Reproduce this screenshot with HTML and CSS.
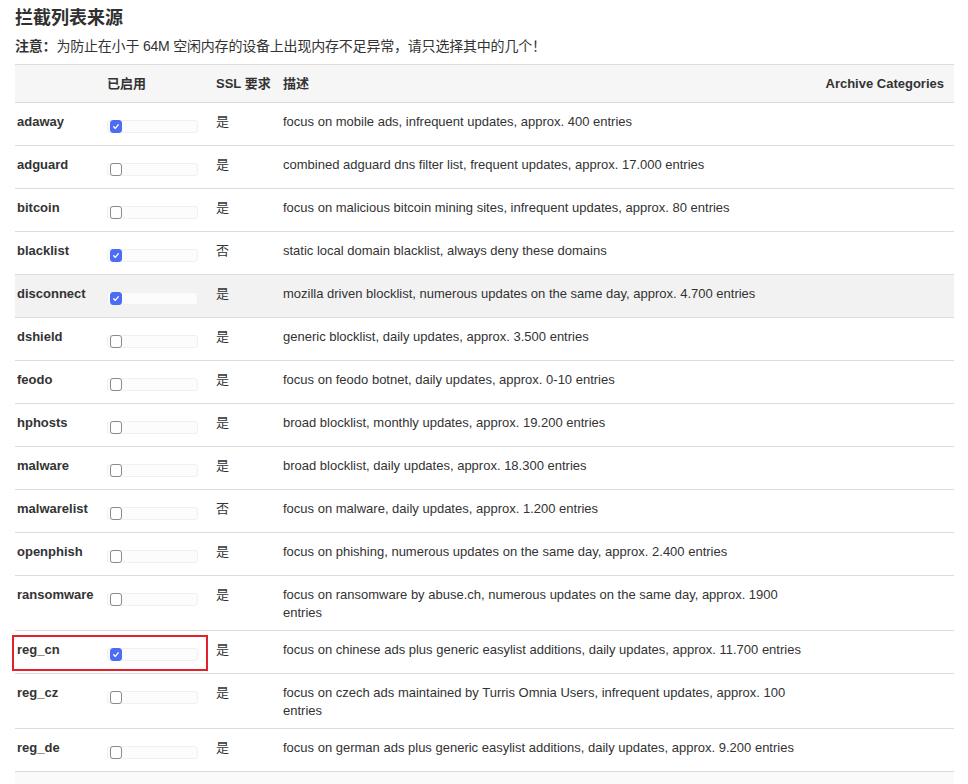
FILE: index.html
```html
<!DOCTYPE html>
<html lang="zh-CN">
<head>
<meta charset="utf-8">
<title>拦截列表来源</title>
<link rel="stylesheet" href="styles.css">
</head>
<body>
<div class="wrap">
  <h3 class="title">拦截列表来源</h3>
  <p class="note"><b>注意：</b>为防止在小于 64M 空闲内存的设备上出现内存不足异常，请只选择其中的几个！</p>
  <table class="list">
    <colgroup>
      <col class="c-name"><col class="c-en"><col class="c-ssl"><col class="c-desc"><col class="c-cat">
    </colgroup>
    <thead>
      <tr><th></th><th>已启用</th><th>SSL 要求</th><th>描述</th><th class="right">Archive Categories</th></tr>
    </thead>
    <tbody>
      <tr><td class="name">adaway</td><td><div class="field"><span class="cb on"><svg viewBox="0 0 12 12"><path d="M3.3 6.3 L5.2 8.3 L8.8 3.8"/></svg></span></div></td><td>是</td><td>focus on mobile ads, infrequent updates, approx. 400 entries</td><td></td></tr>
      <tr><td class="name">adguard</td><td><div class="field"><span class="cb"></span></div></td><td>是</td><td>combined adguard dns filter list, frequent updates, approx. 17.000 entries</td><td></td></tr>
      <tr><td class="name">bitcoin</td><td><div class="field"><span class="cb"></span></div></td><td>是</td><td>focus on malicious bitcoin mining sites, infrequent updates, approx. 80 entries</td><td></td></tr>
      <tr><td class="name">blacklist</td><td><div class="field"><span class="cb on"><svg viewBox="0 0 12 12"><path d="M3.3 6.3 L5.2 8.3 L8.8 3.8"/></svg></span></div></td><td>否</td><td>static local domain blacklist, always deny these domains</td><td></td></tr>
      <tr class="hover"><td class="name">disconnect</td><td><div class="field"><span class="cb on"><svg viewBox="0 0 12 12"><path d="M3.3 6.3 L5.2 8.3 L8.8 3.8"/></svg></span></div></td><td>是</td><td>mozilla driven blocklist, numerous updates on the same day, approx. 4.700 entries</td><td></td></tr>
      <tr><td class="name">dshield</td><td><div class="field"><span class="cb"></span></div></td><td>是</td><td>generic blocklist, daily updates, approx. 3.500 entries</td><td></td></tr>
      <tr><td class="name">feodo</td><td><div class="field"><span class="cb"></span></div></td><td>是</td><td>focus on feodo botnet, daily updates, approx. 0-10 entries</td><td></td></tr>
      <tr><td class="name">hphosts</td><td><div class="field"><span class="cb"></span></div></td><td>是</td><td>broad blocklist, monthly updates, approx. 19.200 entries</td><td></td></tr>
      <tr><td class="name">malware</td><td><div class="field"><span class="cb"></span></div></td><td>是</td><td>broad blocklist, daily updates, approx. 18.300 entries</td><td></td></tr>
      <tr><td class="name">malwarelist</td><td><div class="field"><span class="cb"></span></div></td><td>否</td><td>focus on malware, daily updates, approx. 1.200 entries</td><td></td></tr>
      <tr><td class="name">openphish</td><td><div class="field"><span class="cb"></span></div></td><td>是</td><td>focus on phishing, numerous updates on the same day, approx. 2.400 entries</td><td></td></tr>
      <tr><td class="name">ransomware</td><td><div class="field"><span class="cb"></span></div></td><td>是</td><td>focus on ransomware by abuse.ch, numerous updates on the same day, approx. 1900 entries</td><td></td></tr>
      <tr><td class="name mark-cell">reg_cn<span class="mark"></span></td><td><div class="field"><span class="cb on"><svg viewBox="0 0 12 12"><path d="M3.3 6.3 L5.2 8.3 L8.8 3.8"/></svg></span></div></td><td>是</td><td>focus on chinese ads plus generic easylist additions, daily updates, approx. 11.700 entries</td><td></td></tr>
      <tr><td class="name">reg_cz</td><td><div class="field"><span class="cb"></span></div></td><td>是</td><td>focus on czech ads maintained by Turris Omnia Users, infrequent updates, approx. 100 entries</td><td></td></tr>
      <tr><td class="name">reg_de</td><td><div class="field"><span class="cb"></span></div></td><td>是</td><td>focus on german ads plus generic easylist additions, daily updates, approx. 9.200 entries</td><td></td></tr>
      <tr class="next"><td></td><td><div class="field blank"></div></td><td></td><td></td><td></td></tr>
    </tbody>
  </table>
</div>
</body>
</html>
```

FILE: styles.css
```css
html, body {
  margin: 0;
  padding: 0;
  background: #fff;
}
body {
  font-family: "Liberation Sans", "Noto Sans CJK SC", sans-serif;
  color: #333;
  font-size: 13px;
  overflow: hidden;
}
.wrap {
  padding: 7px 14px 0 15px;
}
.title {
  margin: 0;
  font-size: 18px;
  line-height: 22px;
  font-weight: bold;
  color: #303030;
}
.note {
  margin: 8px 0 9px;
  font-size: 14px;
  line-height: 18px;
  letter-spacing: -0.2px;
  color: #333;
}
.note b {
  font-weight: bold;
}
.list {
  width: 939px;
  border-collapse: collapse;
  table-layout: fixed;
}
.c-name { width: 90px; }
.c-en { width: 109px; }
.c-ssl { width: 67px; }
.c-desc { width: 539px; }
.c-cat { width: 134px; }
.list th {
  background: #f6f6f6;
  border-top: 1px solid #dcdcdc;
  border-bottom: 1px solid #dcdcdc;
  padding: 10px 2px 9px;
  text-align: left;
  font-weight: bold;
  line-height: 18px;
  font-size: 13px;
  color: #333;
}
.list th.right {
  text-align: right;
  padding-right: 10px;
}
.list td {
  border-top: 1px solid #dcdcdc;
  padding: 10px 2px 8px;
  line-height: 18px;
  vertical-align: top;
  color: #333;
}
.list td.name {
  font-weight: bold;
}
.list tr.hover td {
  background: #f2f2f2;
}
.list tr.next td {
  background: #fafafa;
}
.field {
  position: relative;
  height: 24px;
  box-sizing: border-box;
  padding-top: 7px;
}
.field .cb {
  display: block;
  position: relative;
  z-index: 1;
}
.field::after {
  content: "";
  position: absolute;
  left: 0;
  top: 7px;
  width: 91px;
  height: 13px;
  box-sizing: border-box;
  border: 1px solid #f0f0f0;
  border-radius: 3px;
  background: #fcfcfc;
}
.field.blank::after {
  content: none;
}
.cb {
  margin-left: 3px;
  width: 12px;
  height: 13px;
  box-sizing: border-box;
  border: 1px solid #8a8a8a;
  border-radius: 3px;
  background: #fff;
}
.cb.on {
  border-color: #4c6cf6;
  background: #4c6cf6;
}
.cb svg {
  display: block;
  width: 10px;
  height: 11px;
}
.cb svg path {
  fill: none;
  stroke: #fff;
  stroke-width: 1.6;
  stroke-linecap: round;
  stroke-linejoin: round;
}
.mark-cell {
  position: relative;
}
.mark {
  position: absolute;
  left: -3px;
  top: 4px;
  width: 196px;
  height: 36px;
  box-sizing: border-box;
  border: 2px solid #e3212b;
  pointer-events: none;
}
```
